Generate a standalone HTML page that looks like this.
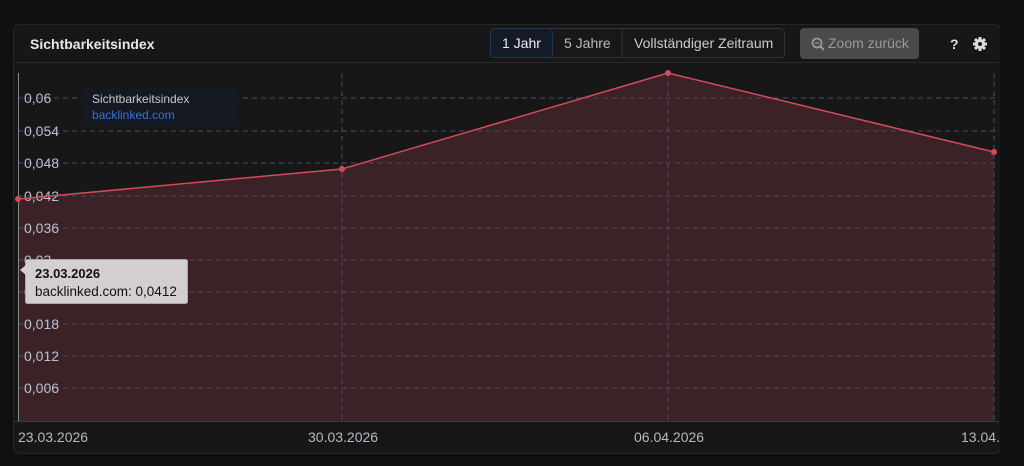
<!DOCTYPE html>
<html><head><meta charset="utf-8"><style>
body{margin:0;width:1024px;height:466px;background:#101010;overflow:hidden;font-family:"Liberation Sans",sans-serif;}
.card{position:absolute;left:13px;top:24px;width:986px;height:428px;background:#171717;border:1px solid #262626;border-radius:6px;overflow:hidden;}
</style></head><body>
<div class="card"></div>
<svg width="1024" height="466" style="position:absolute;left:0;top:0" xmlns="http://www.w3.org/2000/svg" font-family="Liberation Sans, sans-serif">
<line x1="14" y1="62.5" x2="999" y2="62.5" stroke="#2a2a2a"/>
<text x="30" y="49" fill="#e8e8e8" font-size="14" font-weight="bold">Sichtbarkeitsindex</text>
<rect x="490.5" y="28.5" width="294" height="29" rx="4" fill="#181818" stroke="#333"/>
<rect x="490.5" y="28.5" width="62" height="29" rx="4" fill="#141b26" stroke="#1f3656"/>
<line x1="622" y1="29" x2="622" y2="57" stroke="#333"/>
<text x="502" y="48" fill="#f0f0f0" font-size="14">1 Jahr</text>
<text x="564" y="48" fill="#bbb" font-size="14">5 Jahre</text>
<text x="634" y="48" fill="#ccc" font-size="14">Vollständiger Zeitraum</text>
<rect x="800" y="28" width="119" height="31" rx="4" fill="#4a4a4a"/>
<circle cx="817" cy="43" r="4.5" fill="none" stroke="#999" stroke-width="1.8"/><line x1="820" y1="46" x2="824" y2="50" stroke="#999" stroke-width="2"/>
<line x1="815" y1="43" x2="819" y2="43" stroke="#999" stroke-width="1.3"/>
<text x="828" y="48" fill="#999" font-size="14">Zoom zurück</text>
<text x="950" y="49" fill="#ddd" font-size="14" font-weight="bold">?</text>
<g transform="translate(980,44)" fill="#ddd"><circle r="5"/>
<g stroke="#ddd" stroke-width="3"><line x1="0" y1="-7" x2="0" y2="7"/><line x1="-7" y1="0" x2="7" y2="0"/><line x1="-5" y1="-5" x2="5" y2="5"/><line x1="-5" y1="5" x2="5" y2="-5"/></g>
<circle r="2" fill="#171717"/></g>
<path d="M18 199 L342 169 L668 73 L994 152 L994 421 L18 421 Z" fill="#3a2226"/>
<g stroke="#4a4866" stroke-dasharray="5,4" stroke-width="1">
<line x1="18" y1="98" x2="999" y2="98"/><line x1="18" y1="131" x2="999" y2="131"/><line x1="18" y1="163" x2="999" y2="163"/><line x1="18" y1="196" x2="999" y2="196"/><line x1="18" y1="228" x2="999" y2="228"/><line x1="18" y1="260" x2="999" y2="260"/><line x1="18" y1="292" x2="999" y2="292"/><line x1="18" y1="324" x2="999" y2="324"/><line x1="18" y1="356" x2="999" y2="356"/><line x1="18" y1="388" x2="999" y2="388"/>
<line x1="342" y1="73" x2="342" y2="421"/><line x1="668" y1="73" x2="668" y2="421"/><line x1="994" y1="73" x2="994" y2="421"/>
</g>
<line x1="14" y1="421.5" x2="999" y2="421.5" stroke="#3a3550"/>
<line x1="18.5" y1="73" x2="18.5" y2="421" stroke="#888"/>
<g fill="#b8c2d4" font-size="14">
<text x="24" y="103">0,06</text><text x="24" y="136">0,054</text><text x="24" y="168">0,048</text><text x="24" y="201">0,042</text><text x="24" y="233">0,036</text><text x="24" y="265">0,03</text><text x="24" y="297">0,024</text><text x="24" y="329">0,018</text><text x="24" y="361">0,012</text><text x="24" y="393">0,006</text>
</g>
<rect x="82" y="88" width="156" height="38" fill="#141820"/>
<text x="92" y="103" fill="#c8c8c8" font-size="12">Sichtbarkeitsindex</text>
<text x="92" y="119" fill="#3a70d8" font-size="12">backlinked.com</text>
<polyline points="18,199 342,169 668,73 994,152" fill="none" stroke="#d44a5c" stroke-width="1.5"/>
<g fill="#d44a5c"><circle cx="18" cy="199" r="3"/><circle cx="342" cy="169" r="3"/><circle cx="668" cy="73" r="3"/><circle cx="994" cy="152" r="3"/></g>
<rect x="25.5" y="259.5" width="162" height="44" rx="2" fill="#d2cfce" stroke="#aaa"/>
<path d="M26 265 L20 270 L26 275 Z" fill="#d2cfce"/>
<text x="35" y="278" fill="#111" font-size="13" font-weight="bold">23.03.2026</text>
<text x="35" y="296" fill="#111" font-size="13.5">backlinked.com: 0,0412</text>
<g fill="#b5b9c2" font-size="14"><text x="18" y="442">23.03.2026</text><text x="308" y="442">30.03.2026</text><text x="634" y="442">06.04.2026</text><text x="961" y="442">13.04.2026</text></g>
<rect x="1000" y="0" width="24" height="466" fill="#101010"/>
</svg>
</body></html>
